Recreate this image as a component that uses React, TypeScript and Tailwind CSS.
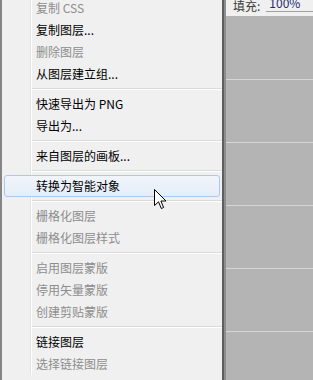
const font = { fontFamily: '"Noto Sans CJK SC", "Noto Sans", sans-serif' };

type Entry = { label: string; disabled?: boolean; active?: boolean } | "sep";

const entries: Entry[] = [
    { label: "复制 CSS", disabled: true },
    { label: "复制图层..." },
    { label: "删除图层", disabled: true },
    { label: "从图层建立组..." },
    "sep",
    { label: "快速导出为 PNG" },
    { label: "导出为..." },
    "sep",
    { label: "来自图层的画板..." },
    "sep",
    { label: "转换为智能对象", active: true },
    "sep",
    { label: "栅格化图层", disabled: true },
    { label: "栅格化图层样式", disabled: true },
    "sep",
    { label: "启用图层蒙版", disabled: true },
    { label: "停用矢量蒙版", disabled: true },
    { label: "创建剪贴蒙版", disabled: true },
    "sep",
    { label: "链接图层" },
    { label: "选择链接图层", disabled: true },
];

const Gutter = () => (
    <>
        <div className="w-[29px] h-full shrink-0 border-r border-[#e2e2e2]"></div>
        <div className="w-px h-full shrink-0 bg-white"></div>
    </>
);

const Cursor = () => (
    <svg width="13" height="21" viewBox="0 0 13 21" className="absolute left-[154px] top-[189px]">
        <path d="M0.5 0.5 L0.5 16.5 L4.5 12.8 L7.3 19.5 L9.6 18.5 L6.9 12 L12 12 Z" fill="#fff" stroke="#000" strokeWidth="1" strokeLinejoin="miter" />
    </svg>
);

export default function App() {
    return (
        <div className="relative w-[313px] h-[380px] overflow-hidden flex bg-[#f0f0f0] text-[12px]" style={font}>
            {/* context menu */}
            <div className="w-[222px] h-full shrink-0 border-l-2 border-[#858585] bg-[#f0f0f0] flex flex-col">
                <div className="flex flex-col mt-[-3px]">
                    {entries.map((e, i) =>
                        e === "sep" ? (
                            <div key={i} className="h-[8px] flex">
                                <Gutter />
                                <div className="flex-1 flex flex-col justify-center">
                                    <div className="h-px bg-[#dadada]"></div>
                                    <div className="h-px bg-white"></div>
                                </div>
                            </div>
                        ) : e.active ? (
                            <div key={i} className="h-[22px] flex items-center mx-[2px] rounded-[3px] border border-[#a9c9f0] bg-gradient-to-b from-[#f1f5fb] to-[#e5edf8]">
                                <span className="pl-[31px] text-black leading-none">{e.label}</span>
                            </div>
                        ) : (
                            <div key={i} className="h-[22px] flex items-center">
                                <Gutter />
                                <span className={`pl-[4px] leading-none ${e.disabled ? "text-[#8d8d8d]" : "text-black"}`}>{e.label}</span>
                            </div>
                        )
                    )}
                </div>
            </div>

            {/* layers panel edge */}
            <div className="w-[2px] h-full shrink-0 bg-[#5e5e5e]"></div>
            <div className="w-[2px] h-full shrink-0 bg-[#8e8e8e]"></div>
            <div className="flex-1 min-w-0 h-full flex flex-col bg-[#b4b4b4]">
                <div className="h-[16px] shrink-0 bg-[#f0f0f0] pl-[7px] overflow-hidden">
                    <div className="flex items-end whitespace-nowrap mt-[-3px] leading-none">
                        <span className="shrink-0 text-[#3a3a3a]">填充:</span>
                        <span className="shrink-0 ml-[6px] w-[60px] pl-[3px] pb-[2px] border-b border-[#a0a0a0] text-[#1c2a6e]">100%</span>
                    </div>
                </div>
                <div className="h-[64px] shrink-0 border-b border-[#d6d6d6]"></div>
                <div className="h-[63px] shrink-0 border-b border-[#d6d6d6]"></div>
                <div className="h-[63px] shrink-0 border-b border-[#d6d6d6]"></div>
                <div className="h-[63px] shrink-0 border-b border-[#d6d6d6]"></div>
                <div className="h-[63px] shrink-0 border-b border-[#d6d6d6]"></div>
            </div>

            <Cursor />
        </div>
    );
}
